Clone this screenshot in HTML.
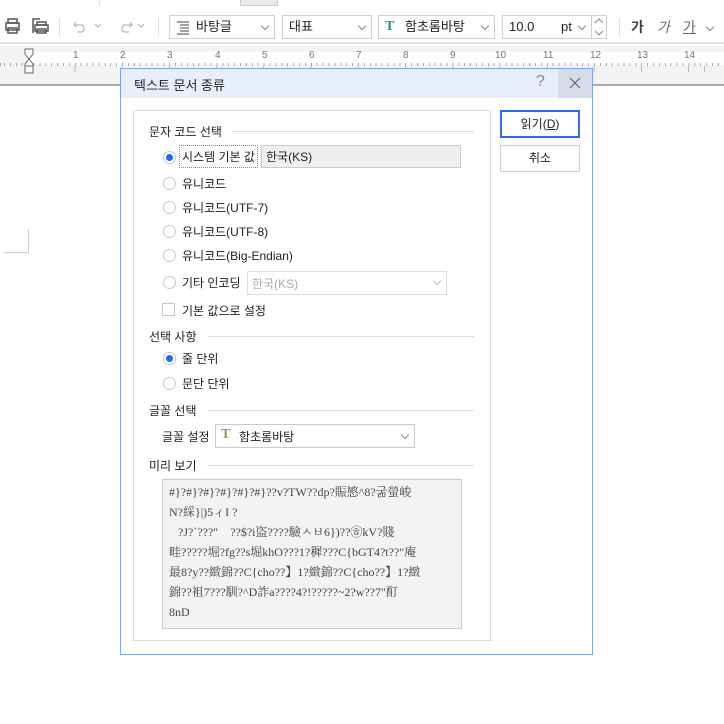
<!DOCTYPE html>
<html><head><meta charset="utf-8"><style>
*{margin:0;padding:0;box-sizing:border-box}
body{width:724px;height:724px;position:relative;overflow:hidden;background:#fff;font-family:"Liberation Sans","Noto Sans CJK KR",sans-serif;font-size:12px;color:#222}
.a{position:absolute}
.box{position:absolute;border:1px solid #cfcfcf;background:#fff;height:24px;top:15px;font-size:13px;line-height:22px;padding-left:6px}
.chev{position:absolute;right:6px;top:7px;width:6px;height:6px;border-right:1px solid #888;border-bottom:1px solid #888;transform:rotate(45deg)}
.sep{position:absolute;top:18px;width:1px;height:18px;background:#ddd}
.rn{position:absolute;top:50px;font-size:10px;color:#777}
.sec{position:absolute;left:149px;font-size:12px;color:#222}
.ln{position:absolute;height:1px;background:#ddd;right:250px}
.rad{position:absolute;left:163px;width:13px;height:13px;border:1px solid #c8c8c8;border-radius:50%;background:#fff}
.rad.on::after{content:"";position:absolute;left:2px;top:2px;width:7px;height:7px;border-radius:50%;background:#1d6af5}
.lbl{position:absolute;left:182px;font-size:12px}
</style></head><body>
<!-- toolbar -->
<div class="a" style="left:0;top:0;width:724px;height:44px;background:#fff;border-bottom:2px solid #e2e2e2"></div>
<div class="a" style="left:99px;top:0;width:1px;height:6px;background:#ddd"></div>
<div class="a" style="left:240px;top:0;width:38px;height:6px;background:#e8e8e8;border:1px solid #ccc;border-top:none"></div>
<svg class="a" style="left:4px;top:17px" width="50" height="20" viewBox="0 0 50 20" fill="none" stroke="#555" stroke-width="1.5">
<rect x="4" y="2" width="9" height="4"/><rect x="2" y="6" width="13" height="7"/><rect x="4" y="11" width="9" height="5"/>
<path d="M29 16 V2 H36"/><rect x="33" y="5" width="9" height="3"/><rect x="31" y="8" width="13" height="6"/><rect x="33" y="12" width="9" height="4"/>
</svg>
<div class="sep" style="left:59px"></div>
<svg class="a" style="left:72px;top:18px" width="80" height="16" viewBox="0 0 80 16" fill="none" stroke="#bbb" stroke-width="1.3">
<path d="M4 4 L2 7 L5 9 M2 7 H10 A4 4 0 0 1 10 14 H5"/><path d="M23 6 l3 3 l3 -3"/>
<path d="M58 4 L60 7 L57 9 M60 7 H52 A4 4 0 0 0 52 14 H57"/><path d="M66 6 l3 3 l3 -3"/>
</svg>
<div class="sep" style="left:158px"></div>
<div class="box" style="left:169px;width:106px;padding-left:26px">바탕글<svg class="a" style="left:6px;top:5px" width="14" height="14" stroke="#444"><path d="M1 1H13M4 4H13M4 7H13M4 10H13M1 13H13"/></svg><span class="chev"></span></div>
<div class="box" style="left:282px;width:90px">대표<span class="chev"></span></div>
<div class="box" style="left:378px;width:117px;padding-left:26px">함초롬바탕<span class="a" style="left:6px;top:0;color:#1a9a8a;font-family:'Liberation Serif',serif;font-weight:bold;font-size:14px">T</span><span class="chev"></span></div>
<div class="box" style="left:502px;width:90px">10.0<span class="a" style="left:58px">pt</span><span class="chev"></span></div>
<div class="box" style="left:591px;width:16px;padding:0"><svg width="14" height="22" stroke="#888" fill="none"><path d="M3 7l4-4 4 4M3 15l4 4 4-4"/></svg></div>
<div class="sep" style="left:619px"></div>
<div class="a" style="left:631px;top:17px;font-size:14px;font-weight:bold;color:#444">가</div>
<div class="a" style="left:657px;top:17px;font-size:14px;font-style:italic;color:#666">가</div>
<div class="a" style="left:683px;top:17px;font-size:14px;color:#666;text-decoration:underline">가</div>
<div class="a" style="left:707px;top:24px;width:6px;height:6px;border-right:1px solid #888;border-bottom:1px solid #888;transform:rotate(45deg)"></div>
<!-- ruler -->
<div class="a" style="left:0;top:46px;width:724px;height:40px;background:#f3f3f3;border-bottom:2px solid #aaa"></div>
<div class="a" style="left:30px;top:52px;width:694px;height:13px;background:#fff"></div>
<div class="a" style="left:0;top:63px;width:724px;height:3px;background:repeating-linear-gradient(90deg,#aaa 0 1px,transparent 1px 5.9px);background-position:4px 0"></div>
<div class="a" style="left:0;top:66px;width:724px;height:6px;background:repeating-linear-gradient(90deg,#aaa 0 1px,transparent 1px 47.2px);background-position:-20px 0;opacity:.8"></div>
<svg class="a" style="left:23px;top:48px" width="12" height="26" fill="#fff" stroke="#666"><path d="M2 1H10V6L6 11L2 6Z"/><path d="M6 11L10 16V25H2V16Z"/><path d="M2 18H10"/></svg>
<div class="rn" style="left:73px">1</div><div class="rn" style="left:120px">2</div><div class="rn" style="left:167px">3</div><div class="rn" style="left:215px">4</div><div class="rn" style="left:262px">5</div><div class="rn" style="left:309px">6</div><div class="rn" style="left:356px">7</div><div class="rn" style="left:403px">8</div><div class="rn" style="left:450px">9</div><div class="rn" style="left:495px">10</div><div class="rn" style="left:543px">11</div><div class="rn" style="left:590px">12</div><div class="rn" style="left:637px">13</div><div class="rn" style="left:684px">14</div>
<div class="a" style="left:4px;top:229px;width:25px;height:24px;border-right:1px solid #ccc;border-bottom:1px solid #ccc"></div>
<!-- dialog -->
<div class="a" style="left:120px;top:68px;width:473px;height:587px;background:#fff;border:1px solid #7aa4f5"></div>
<div class="a" style="left:121px;top:69px;width:471px;height:29px;background:#e9eefc"></div>
<div class="a" style="left:558px;top:69px;width:34px;height:29px;background:#d6dcea"></div>
<div class="a" style="left:134px;top:75px;font-size:13px">텍스트 문서 종류</div>
<div class="a" style="left:536px;top:73px;font-size:16px;color:#888">?</div>
<svg class="a" style="left:569px;top:77px" width="12" height="12" stroke="#666" stroke-width="1.2"><path d="M1 1L11 11M11 1L1 11"/></svg>
<div class="a" style="left:133px;top:110px;width:358px;height:531px;border:1px solid #dcdcdc"></div>
<div class="a" style="left:500px;top:110px;width:80px;height:28px;border:2px solid #2f6bf0;text-align:center;line-height:24px;font-size:12px">읽기(<u>D</u>)</div>
<div class="a" style="left:500px;top:145px;width:80px;height:27px;border:1px solid #ccc;text-align:center;line-height:25px;font-size:12px">취소</div>

<div class="sec" style="top:123px">문자 코드 선택</div><div class="ln" style="left:232px;top:131px"></div>
<div class="rad on" style="top:151px"></div>
<div class="a" style="left:179px;top:145px;width:79px;height:23px;border:1px dotted #888"></div>
<div class="lbl" style="top:148px">시스템 기본 값</div>
<div class="a" style="left:261px;top:145px;width:200px;height:23px;background:#efefef;border:1px solid #ccc;padding:2px 4px">한국(KS)</div>
<div class="rad" style="top:177px"></div><div class="lbl" style="top:175px">유니코드</div>
<div class="rad" style="top:201px"></div><div class="lbl" style="top:199px">유니코드(UTF-7)</div>
<div class="rad" style="top:225px"></div><div class="lbl" style="top:223px">유니코드(UTF-8)</div>
<div class="rad" style="top:249px"></div><div class="lbl" style="top:247px">유니코드(Big-Endian)</div>
<div class="rad" style="top:276px"></div><div class="lbl" style="top:274px">기타 인코딩</div>
<div class="a" style="left:247px;top:271px;width:200px;height:24px;border:1px solid #ddd;color:#aaa;padding:3px 4px">한국(KS)<span class="chev" style="border-color:#bbb;top:6px"></span></div>
<div class="a" style="left:162px;top:303px;width:13px;height:13px;border:1px solid #c8c8c8"></div><div class="lbl" style="top:302px">기본 값으로 설정</div>

<div class="sec" style="top:328px">선택 사항</div><div class="ln" style="left:208px;top:336px"></div>
<div class="rad on" style="top:352px"></div><div class="lbl" style="top:350px">줄 단위</div>
<div class="rad" style="top:377px"></div><div class="lbl" style="top:375px">문단 단위</div>

<div class="sec" style="top:402px">글꼴 선택</div><div class="ln" style="left:208px;top:410px"></div>
<div class="a" style="left:162px;top:428px">글꼴 설정</div>
<div class="a" style="left:215px;top:424px;width:200px;height:24px;border:1px solid #ccc;padding:3px 4px 0 23px">함초롬바탕<span class="a" style="left:5px;top:2px;color:#7aa64a;font-family:'Liberation Serif',serif;font-weight:bold;font-size:14px">T</span><span class="chev"></span></div>

<div class="sec" style="top:457px">미리 보기</div><div class="ln" style="left:208px;top:465px"></div>
<div class="a" style="left:162px;top:479px;width:300px;height:150px;background:#f3f3f3;border:1px solid #ccc;padding:2px 6px;font-family:'Liberation Serif','Noto Serif CJK SC',serif;font-size:12px;line-height:20px;color:#444;white-space:pre;overflow:hidden">#}?#}?#}?#}?#}?#}??v?TW??dp?賑慜^8?굶螢峻
N?綵}|)5ィI ?
   ?J?`???"    ??$?i盜????驗ㅅㅂ6})??㉭kV?賤
畦?????堀?fg??s堀khO???1?穉???C{bGT4?t??"庵
最8?y??緻錦??C{cho??】1?緻錦??C{cho??】1?緻
錦??袓7???馴?^D詐a????4?!?????~2?w??7"酊
8nD</div>
</body></html>
